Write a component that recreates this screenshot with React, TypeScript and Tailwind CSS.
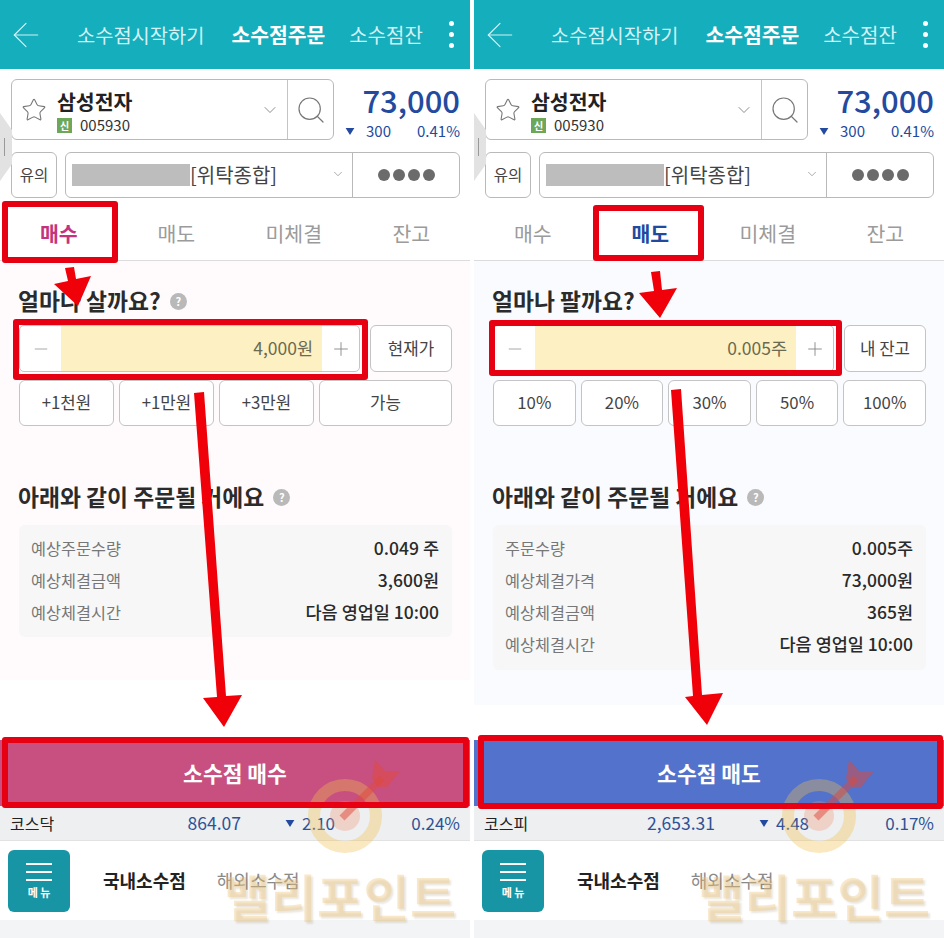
import React from 'react';
import { ArrowLeft, ChevronDown, Minus, Plus, Search, Star } from 'lucide-react';

interface PanelData {
  side: 'buy' | 'sell';
  heading: string;
  amount: string;
  sideButton: string;
  presets: string[];
  presetsClass: string;
  rows: [string, string][];
  contentClass: string;
  tableClass: string;
  cta: string;
  ctaClass: string;
  index: [string, string, string, string];
  markerClass: string[];
  shortArrow: string;
  longArrow: string;
}

const TABS = ['매수', '매도', '미체결', '잔고'];

const PANELS: PanelData[] = [
  {
    side: 'buy',
    heading: '얼마나 살까요?',
    amount: '4,000원',
    sideButton: '현재가',
    presets: ['+1천원', '+1만원', '+3만원', '가능'],
    presetsClass: 'grid-cols-[95px_95px_95px_133px]',
    rows: [
      ['예상주문수량', '0.049 주'],
      ['예상체결금액', '3,600원'],
      ['예상체결시간', '다음 영업일 10:00'],
    ],
    contentClass: 'h-[419px] bg-[#fffbfc]',
    tableClass: 'h-[112px]',
    cta: '소수점 매수',
    ctaClass: 'bg-[#c85080]',
    index: ['코스닥', '864.07', '2.10', '0.24%'],
    markerClass: [
      'left-[2px] top-[201px] w-[116px] h-[62px]',
      'left-[13px] top-[319px] w-[355px] h-[61px]',
      'left-[2px] top-[737px] w-[467px] h-[71px]',
    ],
    shortArrow: '65,268 74,267 76,279 91,276 78,306 54,284 68,281',
    longArrow: '194,393 204,392 226,696 242,695 224,727 203,698 217,697',
  },
  {
    side: 'sell',
    heading: '얼마나 팔까요?',
    amount: '0.005주',
    sideButton: '내 잔고',
    presets: ['10%', '20%', '30%', '50%', '100%'],
    presetsClass: 'grid-cols-5',
    rows: [
      ['주문수량', '0.005주'],
      ['예상체결가격', '73,000원'],
      ['예상체결금액', '365원'],
      ['예상체결시간', '다음 영업일 10:00'],
    ],
    contentClass: 'h-[444px] bg-[#fafbff]',
    tableClass: 'h-[145px]',
    cta: '소수점 매도',
    ctaClass: 'bg-[#5272cc]',
    index: ['코스피', '2,653.31', '4.48', '0.17%'],
    markerClass: [
      'left-[119px] top-[205px] w-[111px] h-[56px]',
      'left-[15px] top-[320px] w-[353px] h-[56px]',
      'left-[4px] top-[735px] w-[465px] h-[74px]',
    ],
    shortArrow: '177,272 186,271 188,290 203,288 186,318 165,293 180,291',
    longArrow: '197,390 207,389 228,695 249,693 233,725 211,697 219,696',
  },
];

function HelpDot() {
  return (
    <span className="ml-[9px] flex h-[17px] w-[17px] items-center justify-center rounded-full bg-[#b9b9b9] text-[11px] font-bold leading-none text-white">
      ?
    </span>
  );
}

function DownTriangle({ className }: { className: string }) {
  return (
    <svg viewBox="0 0 10 8" className={className}>
      <path d="M0 0h10L5 8z" fill="#234a9e" />
    </svg>
  );
}

function Watermark() {
  return (
    <>
      <svg viewBox="0 0 100 110" className="pointer-events-none absolute left-[300px] top-[758px] h-[110px] w-[100px]">
        <circle cx="45" cy="58" r="31" fill="none" stroke="#f2c04a" strokeOpacity="0.35" strokeWidth="12" />
        <circle cx="45" cy="58" r="15" fill="#f08a6a" fillOpacity="0.3" />
        <path d="M42 60 L82 20" stroke="#e0483a" strokeOpacity="0.5" strokeWidth="7" />
        <path d="M72 20 L75 2 L85 13 L100 13 L87 29 L78 29z" fill="#e0483a" fillOpacity="0.5" />
      </svg>
      <div className="pointer-events-none absolute left-[224px] top-[860px] text-[50px] font-bold leading-[70px] tracking-[0.01em] text-[#f0c880]/40 [text-shadow:2px_2px_2px_rgba(150,130,90,0.2)]">
        밸리포인트
      </div>
    </>
  );
}

function Panel({ data }: { data: PanelData }) {
  const activeTab = data.side === 'buy' ? 0 : 1;

  return (
    <div className="relative flex h-[938px] w-[470px] flex-col overflow-hidden bg-white">
      {/* header */}
      <div className="flex h-[69px] items-center bg-[#14aebd] text-[20px] text-[#d3f1f4]">
        <ArrowLeft className="ml-[6px] h-[40px] w-[40px]" strokeWidth={0.7} />
        <span className="ml-[31px] text-[19.8px]">소수점시작하기</span>
        <span className="ml-[27px] text-[20.4px] font-bold text-white">소수점주문</span>
        <span className="ml-[24px]">소수점잔</span>
        <span className="ml-[26px] flex flex-col gap-[6px]">
          <i className="h-[5px] w-[5px] rounded-full bg-white" />
          <i className="h-[5px] w-[5px] rounded-full bg-white" />
          <i className="h-[5px] w-[5px] rounded-full bg-white" />
        </span>
      </div>

      {/* stock */}
      <div className="mt-[10px] flex h-[61px] pl-[11px] pr-[10px]">
        <div className="flex w-[323px] rounded-[6px] border border-[#b9b9b9] bg-white">
          <Star className="ml-[9px] mt-[17px] h-[26px] w-[26px] text-[#777]" strokeWidth={1} />
          <div className="ml-[10px] flex-1">
            <div className="mt-[7px] text-[20.5px] font-bold leading-[28px] text-[#222]">삼성전자</div>
            <div className="mt-[1px] flex items-center">
              <span className="flex h-[15px] w-[15px] items-center justify-center bg-[#6da85a] text-[10px] font-bold text-white">
                신
              </span>
              <span className="ml-[8px] text-[15px] leading-[18px] text-[#333]">005930</span>
            </div>
          </div>
          <ChevronDown className="mr-[7px] mt-[20px] h-[20px] w-[20px] text-[#777]" strokeWidth={1} />
          <div className="flex w-[46px] items-center justify-center border-l border-[#c4c4c4]">
            <Search className="h-[32px] w-[32px] text-[#777]" strokeWidth={0.9} />
          </div>
        </div>
        <div className="flex-1 text-right">
          <div className="mt-[1px] text-[31px] font-medium leading-[40px] text-[#234a9e]">73,000</div>
          <div className="mt-[1px] flex items-center text-[15px] leading-[20px] text-[#234a9e]">
            <DownTriangle className="ml-[11px] h-[7px] w-[10px]" />
            <span className="ml-[11px]">300</span>
            <span className="ml-auto">0.41%</span>
          </div>
        </div>
      </div>

      {/* account */}
      <div className="mt-[12px] flex h-[46px] pl-[11px] pr-[10px]">
        <div className="flex w-[46px] items-center justify-center rounded-[6px] border border-[#b9b9b9] text-[15.5px] text-[#444]">
          유의
        </div>
        <div className="ml-[8px] flex flex-1 rounded-[6px] border border-[#b9b9b9]">
          <div className="ml-[6px] mt-[11px] h-[22px] w-[118px] bg-[#bdbdbd]" />
          <span className="text-[20px] leading-[44px] text-[#444]">[위탁종합]</span>
          <ChevronDown className="ml-auto mr-[7px] mt-[14px] h-[14px] w-[14px] text-[#888]" strokeWidth={1.2} />
          <div className="flex w-[107px] items-center justify-center gap-[3px] border-l border-[#b9b9b9]">
            <i className="h-[12px] w-[12px] rounded-full bg-[#6b6b6b]" />
            <i className="h-[12px] w-[12px] rounded-full bg-[#6b6b6b]" />
            <i className="h-[12px] w-[12px] rounded-full bg-[#6b6b6b]" />
            <i className="h-[12px] w-[12px] rounded-full bg-[#6b6b6b]" />
          </div>
        </div>
      </div>

      {/* tabs */}
      <div className="mt-[2px] grid h-[61px] grid-cols-4 border-b border-[#dcdcdc] pt-[6px]">
        {TABS.map((tab, i) => (
          <div
            key={tab}
            className={
              'flex items-center justify-center text-[20.5px] ' +
              (i !== activeTab
                ? 'text-[#9b9b9b]'
                : data.side === 'buy'
                  ? 'font-bold text-[#c4347c]'
                  : 'font-bold text-[#1f4a9e]')
            }
          >
            {tab}
          </div>
        ))}
      </div>

      {/* order form */}
      <div className={'pl-[19px] pr-[18px] ' + data.contentClass}>
        <div className="-ml-[1px] mt-[25px] flex h-[30px] items-center text-[22.8px] font-semibold text-[#2b2b2b]">
          {data.heading}
          {data.side === 'buy' && <HelpDot />}
        </div>
        <div className="mt-[9px] flex h-[47px]">
          <div className="flex w-[341px] overflow-hidden rounded-[5px] border border-[#c4c4c4] bg-white">
            <div className="flex w-[41px] items-center justify-center text-[#999]">
              <Minus className="h-[20px] w-[20px]" strokeWidth={1} />
            </div>
            <div className="flex flex-1 items-center justify-end bg-[#fdf0c3] pr-[9px] text-[17.5px] text-[#6b6a50]">
              {data.amount}
            </div>
            <div className="flex w-[37px] items-center justify-center text-[#888]">
              <Plus className="h-[22px] w-[22px]" strokeWidth={1} />
            </div>
          </div>
          <div className="ml-[10px] flex w-[82px] items-center justify-center rounded-[6px] border border-[#c4c4c4] bg-white text-[16.8px] text-[#444]">
            {data.sideButton}
          </div>
        </div>
        <div className={'mt-[8px] grid h-[46px] gap-[5px] ' + data.presetsClass}>
          {data.presets.map(label => (
            <div
              key={label}
              className="flex items-center justify-center rounded-[6px] border border-[#c4c4c4] bg-white text-[16.8px] text-[#444]"
            >
              {label}
            </div>
          ))}
        </div>
        <div className="-ml-[1px] mt-[56px] flex h-[30px] items-center text-[22.8px] font-semibold text-[#2b2b2b]">
          아래와 같이 주문될 거에요
          <HelpDot />
        </div>
        <div className={'mt-[13px] flex flex-col rounded-[6px] bg-[#f7f7f7] pl-[12px] pr-[13px] pt-[7px] ' + data.tableClass}>
          {data.rows.map(([label, value]) => (
            <div key={label} className="flex h-[32px] items-center justify-between">
              <span className="text-[16.3px] text-[#777]">{label}</span>
              <span className="text-[17.5px] font-medium text-[#2a2a2a]">{value}</span>
            </div>
          ))}
        </div>
      </div>

      <div className="flex-1" />

      {/* buy/sell button */}
      <div className={'flex h-[66px] items-center justify-center text-[21.5px] font-bold text-white ' + data.ctaClass}>
        {data.cta}
      </div>

      {/* index ticker */}
      <div className="flex h-[35px] items-center border-b border-[#e2e2e2] bg-[#eeeff0] pl-[10px] pr-[10px] text-[17px] text-[#2f5296]">
        <span className="flex-1 text-[16px] text-[#222]">{data.index[0]}</span>
        <span className="text-[17.5px]">{data.index[1]}</span>
        <span className="flex w-[94px] items-center justify-end">
          <DownTriangle className="mr-[7px] h-[7px] w-[10px]" />
          {data.index[2]}
        </span>
        <span className="w-[125px] text-right">{data.index[3]}</span>
      </div>

      {/* bottom nav */}
      <div className="flex h-[79px] items-center pl-[8px]">
        <div className="flex h-[62px] w-[62px] flex-col items-center rounded-[6px] bg-[#1795a5] pt-[13px]">
          <i className="h-[2px] w-[26px] bg-white" />
          <i className="mt-[6px] h-[2px] w-[26px] bg-white" />
          <i className="mt-[6px] h-[2px] w-[26px] bg-white" />
          <span className="mt-[4px] text-[11px] font-bold leading-[14px] text-white">메 뉴</span>
        </div>
        <span className="ml-[33px] text-[18px] font-bold text-[#222]">국내소수점</span>
        <span className="ml-[31px] text-[18px] text-[#8a8a8a]">해외소수점</span>
      </div>
      <div className="h-[18px] bg-[#f3f4f5]" />

      {/* pull handle at the left edge */}
      <div className="absolute left-0 top-[113px] h-[68px] w-[12px] bg-[#e2e2e2] [clip-path:polygon(0_0,100%_25%,100%_75%,0_100%)]">
        <i className="ml-[4px] mt-[25px] block h-[18px] w-[1px] bg-[#999]" />
      </div>

      <Watermark />

      {/* red annotation boxes */}
      {data.markerClass.map(cls => (
        <div key={cls} className={'absolute rounded-[3px] border-[6px] border-[#e60012] ' + cls} />
      ))}
      <svg viewBox="0 0 470 938" className="pointer-events-none absolute left-0 top-0 h-[938px] w-[470px]">
        <polygon points={data.shortArrow} fill="#f00008" />
        <polygon points={data.longArrow} fill="#f00008" />
      </svg>
    </div>
  );
}

export default function App() {
  return (
    <div className="flex h-[938px] w-[944px] gap-[4px] overflow-hidden bg-white font-['Noto_Sans_CJK_KR','Noto_Sans',sans-serif]">
      {PANELS.map(panel => (
        <Panel key={panel.side} data={panel} />
      ))}
    </div>
  );
}
